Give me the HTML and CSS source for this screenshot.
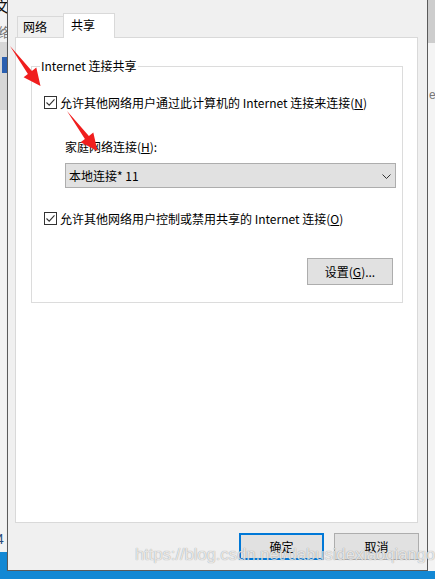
FILE: index.html
```html
<!DOCTYPE html>
<html lang="zh-CN">
<head>
<meta charset="utf-8">
<title>共享</title>
<link rel="stylesheet" href="styles.css">
</head>
<body>
<div class="screen">
  <div class="side side-left">
    <div class="sl-top"><span class="glyph g1">文</span><span class="glyph g2">络</span></div>
    <div class="sl-band"><span class="sl-icon"></span></div>
    <div class="sl-body"><span class="glyph g3">4</span></div>
    <div class="taskbar"></div>
  </div>

  <div class="dialog-col">
    <div class="dialog">
      <div class="tabs">
        <div class="tab">网络</div>
        <div class="tab tab-active">共享</div>
      </div>
      <div class="panel">
        <fieldset class="group">
          <legend class="group-title">Internet 连接共享</legend>
          <label class="check-row row-first">
            <span class="checkbox"><svg viewBox="0 0 13 13" width="13" height="13"><path d="M2.5 6.5 L5.2 9.2 L10.5 3.3" fill="none" stroke="#333" stroke-width="1.1"/></svg></span>
            <span>允许其他网络用户通过此计算机的 Internet 连接来连接(<u>N</u>)</span>
          </label>
          <div class="field-label">家庭网络连接(<u>H</u>):</div>
          <div class="combo">
            <span>本地连接* 11</span>
            <svg class="chev" viewBox="0 0 9 5" width="9" height="5"><path d="M0.5 0.5 L4.5 4.5 L8.5 0.5" fill="none" stroke="#333" stroke-width="1"/></svg>
          </div>
          <label class="check-row row-second">
            <span class="checkbox"><svg viewBox="0 0 13 13" width="13" height="13"><path d="M2.5 6.5 L5.2 9.2 L10.5 3.3" fill="none" stroke="#333" stroke-width="1.1"/></svg></span>
            <span>允许其他网络用户控制或禁用共享的 Internet 连接(<u>O</u>)</span>
          </label>
          <div class="settings-row">
            <button class="btn btn-settings">设置(<u>G</u>)...</button>
          </div>
        </fieldset>
      </div>
      <div class="actions">
        <button class="btn btn-default">确定</button>
        <button class="btn">取消</button>
      </div>
    </div>
    <div class="taskbar taskbar-mid"></div>
  </div>

  <div class="side side-right">
    <div class="sr-top"></div>
    <div class="sr-body"><span class="glyph g4">e</span></div>
    <div class="taskbar taskbar-right"></div>
  </div>

  <svg class="arrow arrow-1" viewBox="0 0 60 60" width="60" height="60">
    <polygon points="10,46 31.9,70.9 36.3,67.6 40.5,86 23.6,77.3 27.9,74.1" transform="translate(0,-30)" fill="#f01e1e"/>
  </svg>
  <svg class="arrow arrow-2" viewBox="0 0 60 60" width="60" height="60">
    <polygon points="10,46 31.9,70.9 36.3,67.6 40.5,86 23.6,77.3 27.9,74.1" transform="translate(0,-30)" fill="#f01e1e"/>
  </svg>

  <div class="watermark">https://blog.csdn.net/dabusidexiaoqiango</div>
</div>
</body>
</html>
```

FILE: styles.css
```css
* { box-sizing: border-box; }
html, body { margin: 0; padding: 0; }
body {
  width: 435px;
  height: 579px;
  overflow: hidden;
  font-family: "Noto Sans CJK SC", "Noto Sans", sans-serif;
  font-size: 12px;
  color: #000;
  background: #f0f0f0;
}
.screen {
  position: relative;
  width: 435px;
  height: 579px;
  display: grid;
  grid-template-columns: 7px 421px 7px;
}

/* side strips */
.side { display: flex; flex-direction: column; overflow: hidden; }
.glyph { display: block; white-space: nowrap; line-height: 1; }
.sl-top { height: 42px; background: #f3f3f3; overflow: hidden; }
.g1 { font-size: 15px; margin-left: -6px; margin-top: -2px; color: #111; }
.g2 { font-size: 13px; margin-left: -2px; margin-top: 12px; color: #777; }
.sl-band { height: 68px; background: #d7d7d7; padding-top: 15px; }
.sl-icon { display: block; width: 5px; height: 16px; margin-left: 2px; background: #2a5fb0; }
.sl-body { flex: 1; background: #f2f2f2; display: flex; flex-direction: column; justify-content: flex-end; padding-bottom: 6px; }
.g3 { font-size: 14px; margin-left: -4px; color: #2a4a7a; font-family: "Liberation Sans", sans-serif; }
.taskbar { height: 27px; background: #1388d4; flex: none; }
.taskbar-mid { height: 8px; }
.taskbar-right { height: 8px; }
.sr-top { height: 43px; background: #cdcdcd; }
.sr-body { flex: 1; background: #f4f4f4; padding-top: 46px; }
.g4 { font-size: 12px; margin-left: 1px; color: #777; font-family: "Liberation Sans", sans-serif; }

/* dialog */
.dialog-col { display: flex; flex-direction: column; }
.dialog {
  height: 571px;
  background: #f0f0f0;
  border: 1px solid #5a5a5a;
  border-top: none;
  padding: 13px 9px 10px 7px;
  display: flex;
  flex-direction: column;
  box-shadow: 1px 0 2px rgba(0,0,0,0.25);
}

.tabs {
  display: flex;
  align-items: flex-end;
  margin-left: 2px;
  margin-bottom: -1px;
  position: relative;
  z-index: 1;
}
.tab {
  width: 47px;
  height: 22px;
  border: 1px solid #d9d9d9;
  background: #f0f0f0;
  padding-left: 5px;
  line-height: 20px;
}
.tab-active {
  width: 52px;
  height: 25px;
  margin-left: -1px;
  background: #fff;
  border-bottom: none;
  padding-left: 7px;
  line-height: 22px;
}

.panel {
  height: 486px;
  background: #fff;
  border: 1px solid #d9d9d9;
  padding-top: 20px;
}

.group {
  margin: 0 0 0 15px;
  width: 372px;
  min-width: 0;
  padding: 0 9px 17px 12px;
  border: 1px solid #dcdcdc;
  display: flex;
  flex-direction: column;
}
.group-title {
  padding: 0 1px;
  line-height: 16px;
  margin-left: -4px;
}

.check-row {
  display: flex;
  align-items: center;
  height: 18px;
  white-space: nowrap;
}
.row-first { margin-top: 19px; }
.row-second { margin-top: 21px; }
.checkbox {
  width: 13px;
  height: 13px;
  border: 1px solid #333;
  margin-right: 3px;
  position: relative;
  flex: none;
  display: flex;
}
.checkbox svg { position: absolute; left: -1px; top: -1px; }

.field-label {
  margin-top: 27px;
  margin-left: 21px;
  line-height: 18px;
}
.combo {
  margin-top: 7px;
  margin-left: 21px;
  width: 331px;
  height: 25px;
  background: #e1e1e1;
  border: 1px solid #adadad;
  display: flex;
  align-items: center;
  justify-content: space-between;
  padding: 0 4px 0 3px;
}
.chev { margin-top: 1px; }

.settings-row {
  display: flex;
  justify-content: flex-end;
  margin-top: 31px;
}

.btn {
  font-family: inherit;
  font-size: 12px;
  color: #000;
  width: 85px;
  height: 27px;
  background: #e1e1e1;
  border: 1px solid #adadad;
  padding: 0;
  margin: 0;
  line-height: 1;
}
.btn-settings { width: 86px; }
.btn-default { border: 2px solid #0078d7; }

.actions {
  display: flex;
  justify-content: flex-end;
  gap: 10px;
  margin-top: 10px;
  margin-right: -1px;
}

/* overlays */
.arrow { position: absolute; left: 0; top: 30px; pointer-events: none; }
.arrow-2 { left: 57px; top: 95px; }

.watermark {
  position: absolute;
  left: 135px;
  top: 545px;
  font-family: "Liberation Sans", sans-serif;
  font-size: 17px;
  color: rgba(255,255,255,0.75);
  text-shadow: 0 0 1px rgba(0,0,0,0.3), 0 0 1px rgba(0,0,0,0.15);
  white-space: nowrap;
  letter-spacing: -0.2px;
}
```
